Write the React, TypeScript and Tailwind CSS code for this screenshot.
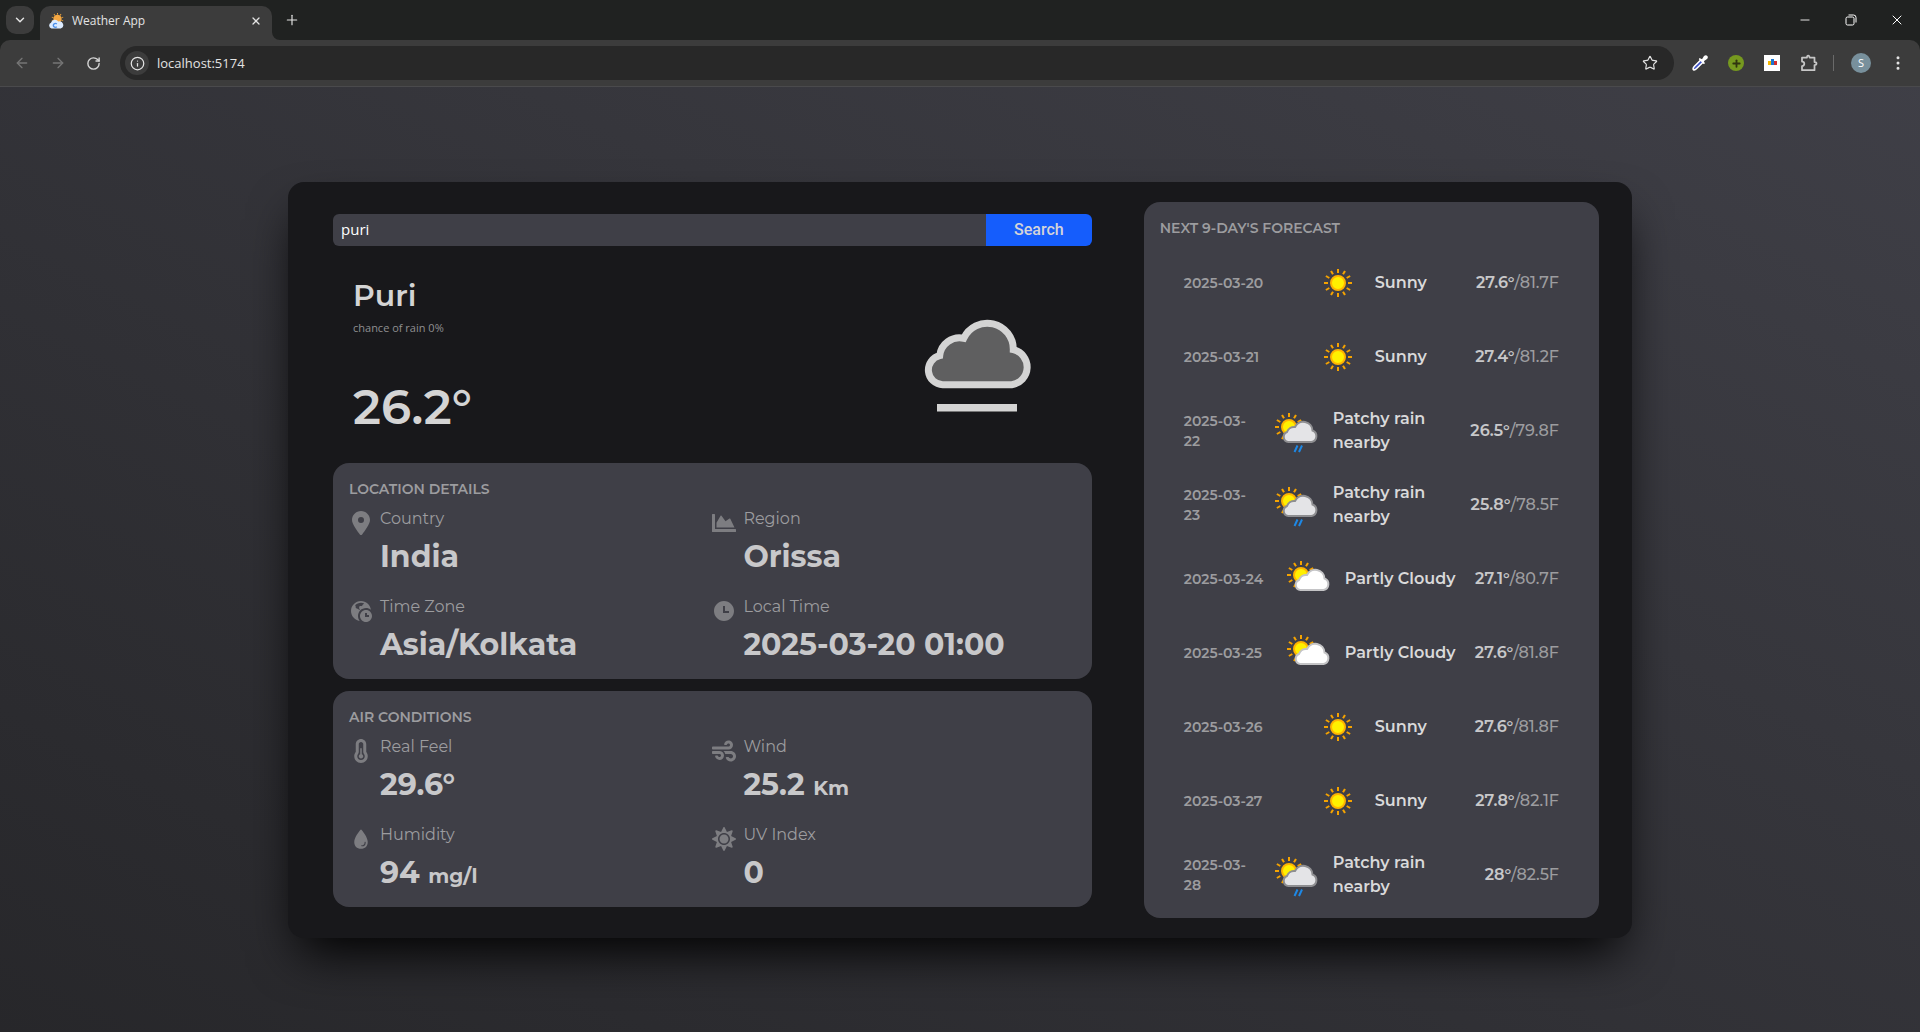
import { useState } from 'react'
import type { ReactNode } from 'react'
import {
  ArrowLeft,
  ArrowRight,
  ChevronDown,
  Info,
  Minus,
  MoreVertical,
  Plus,
  RotateCw,
  Star,
  X,
} from 'lucide-react'
import { FaChartArea, FaSun, FaWind } from 'react-icons/fa'
import { FaLocationDot, FaTemperatureHalf } from 'react-icons/fa6'
import { IoWater } from 'react-icons/io5'
import { RiTimeFill, RiTimeZoneFill } from 'react-icons/ri'

type Sky = 'sunny' | 'partly' | 'rain'

const days: { date: string; sky: Sky; text: string; c: string; f: string }[] = [
  { date: '2025-03-20', sky: 'sunny', text: 'Sunny', c: '27.6°', f: '81.7F' },
  { date: '2025-03-21', sky: 'sunny', text: 'Sunny', c: '27.4°', f: '81.2F' },
  { date: '2025-03-22', sky: 'rain', text: 'Patchy rain nearby', c: '26.5°', f: '79.8F' },
  { date: '2025-03-23', sky: 'rain', text: 'Patchy rain nearby', c: '25.8°', f: '78.5F' },
  { date: '2025-03-24', sky: 'partly', text: 'Partly Cloudy', c: '27.1°', f: '80.7F' },
  { date: '2025-03-25', sky: 'partly', text: 'Partly Cloudy', c: '27.6°', f: '81.8F' },
  { date: '2025-03-26', sky: 'sunny', text: 'Sunny', c: '27.6°', f: '81.8F' },
  { date: '2025-03-27', sky: 'sunny', text: 'Sunny', c: '27.8°', f: '82.1F' },
  { date: '2025-03-28', sky: 'rain', text: 'Patchy rain nearby', c: '28°', f: '82.5F' },
]

const rowColumns: Record<Sky, string> = {
  sunny: 'grid-cols-[122px_69px_1fr_auto]',
  partly: 'grid-cols-[92px_69px_1fr_auto]',
  rain: 'grid-cols-[80px_69px_1fr_auto]',
}

function SunShape({ x, y }: { x: number; y: number }) {
  return (
    <g transform={`translate(${x} ${y})`}>
      {Array.from({ length: 12 }, (_, i) => (
        <line key={i} x1="0" y1="-14" x2="0" y2="-10" stroke="#f5a300" strokeWidth="2" transform={`rotate(${i * 30})`} />
      ))}
      <circle r="7" fill="#fff000" stroke="#ffb400" strokeWidth="2" />
    </g>
  )
}

function SkyIcon({ sky }: { sky: Sky }) {
  const rain = sky === 'rain'
  return (
    <svg viewBox="0 0 64 64" className="size-16" aria-hidden="true">
      {sky === 'sunny' ? (
        <SunShape x={32} y={32} />
      ) : (
        <>
          <SunShape x={25} y={28} />
          <path
            d="M24.5 43A5.2 5.2 0 0 1 23 33A7.6 7.6 0 0 1 31 28A9.2 9.2 0 0 1 48.5 31.5A6 6 0 0 1 47.5 43Z"
            fill={rain ? '#e4e4e7' : '#ffffff'}
            stroke={rain ? '#8e8e91' : '#c4c4c6'}
            strokeWidth="2"
          />
          {rain && <path d="M33.5 46.5L30.5 53M38 46.5L35 53" stroke="#1e88e5" strokeWidth="2" />}
        </>
      )}
    </svg>
  )
}

function OvercastIcon() {
  return (
    <svg viewBox="0 0 128 128" className="size-32" aria-hidden="true">
      <path
        d="M29.7 85.7A14.7 14.7 0 0 1 26.7 56.7A20 20 0 0 1 50.7 39.3A26 26 0 0 1 100.3 50.7A17.8 17.8 0 0 1 98.7 85.7Z"
        fill="#5f5f60"
        stroke="#d4d4d4"
        strokeWidth="7"
      />
      <rect x="24" y="105" width="80" height="7.5" fill="#d4d4d4" />
    </svg>
  )
}

function Detail({ icon, label, value, unit }: { icon: ReactNode; label: string; value: string; unit?: string }) {
  return (
    <div className="flex gap-[7px]">
      <div className="mt-1 flex size-6 shrink-0 justify-center text-2xl text-[#7d7d81]">{icon}</div>
      <div>
        <p className="text-base text-[#9c9c9f]">{label}</p>
        <p className="mt-2 text-[30px] leading-9 font-bold text-[#c8c8ca]">
          {value} {unit && <span className="text-xl">{unit}</span>}
        </p>
      </div>
    </div>
  )
}

function Panel({ title, children }: { title: string; children: ReactNode }) {
  return (
    <section className="rounded-2xl bg-zinc-700 p-4">
      <h2 className="text-sm font-semibold text-[#9c9c9f]">{title}</h2>
      <div className="mt-2 grid grid-cols-2 gap-y-5">{children}</div>
    </section>
  )
}

function Favicon() {
  return (
    <svg viewBox="0 0 16 16" className="size-4" aria-hidden="true">
      <g transform="translate(9.5 6)">
        {Array.from({ length: 10 }, (_, i) => (
          <line key={i} y1="-6" y2="-4.4" stroke="#e9a23b" strokeWidth="1" transform={`rotate(${i * 36})`} />
        ))}
        <circle r="4.2" fill="#f5a742" />
      </g>
      <path d="M3.5 15.5A3 3 0 0 1 3 9.8A4 4 0 0 1 10.3 8.6A3.3 3.3 0 0 1 12.8 15.5Z" fill="#dcebff" />
      <path d="M8.8 11A2 2 0 1 0 8.8 13.8" fill="none" stroke="#4b8fea" strokeWidth="1.4" />
    </svg>
  )
}

function Browser() {
  return (
    <header className="bg-[#202221] font-['Open_Sans',sans-serif] text-[#e3e3e3]">
      <div className="flex h-10 items-end">
        <button aria-label="Search tabs" className="mb-[6px] ml-[6px] flex size-7 items-center justify-center rounded-[10px] bg-[#3c3c3c]">
          <ChevronDown size={14} strokeWidth={2.5} />
        </button>
        <div className="ml-[6px] flex h-[34px] w-[232px] items-center rounded-t-[10px] bg-[#3c3c3c] pr-2 pl-2 pb-1">
          <Favicon />
          <span className="ml-2 flex-1 text-[12px] leading-4">Weather App</span>
          <button aria-label="Close tab" className="flex size-4 items-center justify-center">
            <X size={12} strokeWidth={2.5} />
          </button>
        </div>
        <svg viewBox="0 0 8 8" className="size-2 text-[#3c3c3c]" aria-hidden="true">
          <path d="M0 0A8 8 0 0 0 8 8H0Z" fill="currentColor" />
        </svg>
        <button aria-label="New tab" className="mb-[12px] ml-1 flex size-4 items-center justify-center">
          <Plus size={16} strokeWidth={1.75} />
        </button>
        <div className="mb-[12px] ml-auto flex items-center gap-[30px] pr-[15px] text-white">
          <button aria-label="Minimize" className="flex size-4 items-center justify-center">
            <Minus size={14} strokeWidth={1.5} />
          </button>
          <button aria-label="Restore" className="flex size-4 items-center justify-center">
            <svg viewBox="0 0 12 12" className="size-3" fill="none" stroke="currentColor" aria-hidden="true">
              <rect x="1" y="3" width="8" height="8" rx="1.5" />
              <path d="M3.5 1H8.5A2.5 2.5 0 0 1 11 3.5V8.5" />
            </svg>
          </button>
          <button aria-label="Close" className="flex size-4 items-center justify-center">
            <X size={16} strokeWidth={1.5} />
          </button>
        </div>
      </div>
      <div className="flex h-[47px] items-center rounded-t-[10px] border-b border-[#4a4a4c] bg-[#3c3c3c] pl-[14px]">
        <button aria-label="Back" className="text-[#757575]">
          <ArrowLeft size={16} strokeWidth={2} />
        </button>
        <button aria-label="Forward" className="ml-5 text-[#757575]">
          <ArrowRight size={16} strokeWidth={2} />
        </button>
        <button aria-label="Reload" className="ml-5 text-[#d5d5d5]">
          <RotateCw size={15} strokeWidth={2.25} />
        </button>
        <div className="ml-[19px] flex h-[34px] flex-1 items-center rounded-full bg-[#282828] pr-4 pl-[5px]">
          <button aria-label="Site information" className="flex size-6 items-center justify-center rounded-full bg-[#3c3c3c]">
            <Info size={15} strokeWidth={2} />
          </button>
          <input
            aria-label="Address"
            defaultValue="localhost:5174"
            className="ml-2 flex-1 bg-transparent text-[13px] leading-5 outline-none"
          />
          <button aria-label="Bookmark this tab">
            <Star size={16} strokeWidth={1.75} />
          </button>
        </div>
        <div className="flex items-center pl-[18px]">
          <button aria-label="Colour picker" className="flex size-4 items-center">
            <svg viewBox="0 0 16 16" className="size-4" aria-hidden="true">
              <path d="M9.5 4.2L2.2 11.5C1.3 12.5 1 14 1.4 14.7C2.2 15 3.6 14.6 4.4 13.8L11.8 6.5" fill="#3c50c8" stroke="#fff" strokeWidth="1.6" />
              <path d="M7.5 3L10 4.2L12 1Q14-.4 15.3.9Q16.5 2.2 15 4L11.8 6.2L13 8.5L11.5 9L6.8 4.2Z" fill="#fff" />
            </svg>
          </button>
          <button aria-label="Add extension" className="ml-5 flex size-4 items-center justify-center rounded-full bg-[#76991f] text-[#30350f]">
            <Plus size={11} strokeWidth={4} />
          </button>
          <button aria-label="Analytics extension" className="ml-5 flex size-4 items-center justify-center bg-white">
            <span className="h-1 w-[3px] bg-[#f5b800]" />
            <span className="mb-[2px] h-[6px] w-[3px] bg-[#1976d2]" />
            <span className="h-1 w-[3px] bg-[#d32f2f]" />
          </button>
          <button aria-label="Extensions" className="ml-5 text-[#c7c7c7]">
            <svg viewBox="0 0 18 18" className="size-[18px]" fill="none" stroke="currentColor" strokeWidth="1.75" aria-hidden="true">
              <path d="M2 3.5H7Q7 1.5 8.2 1.5T9.5 3.5H14.5V8Q16.5 8 16.5 9.5T14.5 11V16.2H2V12Q4.3 12 4.3 9.8T2 7.6Z" strokeLinejoin="round" />
            </svg>
          </button>
          <span className="ml-[15px] h-4 w-px bg-[#6a6a6a]" />
          <button className="ml-[17px] flex size-5 items-center justify-center rounded-full bg-[#78909c] text-[11px] text-white">S</button>
          <button aria-label="Menu" className="mr-3 ml-[17px] flex w-5 justify-center">
            <MoreVertical size={18} strokeWidth={2} />
          </button>
        </div>
      </div>
    </header>
  )
}

export default function App() {
  const [city, setCity] = useState('puri')
  return (
    <div className="flex min-h-screen flex-col bg-zinc-800">
      <Browser />
      <main className="flex flex-1 items-center justify-center bg-linear-to-tr from-zinc-800 to-zinc-700 font-['Montserrat','Inter',sans-serif]">
        <div className="grid w-[70%] grid-cols-[5fr_3fr] gap-[52px] rounded-2xl bg-[#18181b] py-5 pr-[33px] pl-[45px] shadow-[0_25px_50px_-12px_rgba(0,0,0,1)]">
          <div className="flex min-w-0 flex-col pt-3">
            <form className="flex h-8" onSubmit={(e) => e.preventDefault()}>
              <input
                aria-label="City"
                value={city}
                onChange={(e) => setCity(e.target.value)}
                className="min-w-0 flex-1 rounded-l-md bg-zinc-700 px-2 font-['Open_Sans',sans-serif] text-[15px] text-white outline-none"
              />
              <button className="rounded-r-md bg-[#155dfc] px-7 font-['Roboto',sans-serif] text-base font-medium text-[#d4d4d8]">
                Search
              </button>
            </form>
            <div className="flex flex-1 items-center justify-between px-5 pt-[30px]">
              <div className="self-start">
                <h1 className="text-[30px] leading-10 font-semibold text-[#d4d4d4]">Puri</h1>
                <p className="mt-1 font-['Open_Sans',sans-serif] text-[11px] leading-4 text-[#8f8f91]">chance of rain 0%</p>
                <p className="mt-[47px] text-[48px] leading-[48px] font-semibold text-[#d4d4d4]">26.2°</p>
              </div>
              <div className="mr-[31px] -mt-3">
                <OvercastIcon />
              </div>
            </div>
            <div className="flex flex-col gap-3 pb-[11px]">
              <Panel title="LOCATION DETAILS">
                <Detail icon={<FaLocationDot />} label="Country" value="India" />
                <Detail icon={<FaChartArea />} label="Region" value="Orissa" />
                <Detail icon={<RiTimeZoneFill />} label="Time Zone" value="Asia/Kolkata" />
                <Detail icon={<RiTimeFill />} label="Local Time" value="2025-03-20 01:00" />
              </Panel>
              <Panel title="AIR CONDITIONS">
                <Detail icon={<FaTemperatureHalf />} label="Real Feel" value="29.6°" />
                <Detail icon={<FaWind />} label="Wind" value="25.2" unit="Km" />
                <Detail icon={<IoWater />} label="Humidity" value="94" unit="mg/l" />
                <Detail icon={<FaSun />} label="UV Index" value="0" />
              </Panel>
            </div>
          </div>
          <section className="min-w-0 rounded-2xl bg-zinc-700 px-4 pt-4 pb-1.5">
            <h2 className="text-sm font-semibold text-[#9c9c9f]">NEXT 9-DAY'S FORECAST</h2>
            <ul className="mt-2 px-6">
              {days.map((d) => (
                <li key={d.date} className={`grid h-[74px] items-center ${rowColumns[d.sky]}`}>
                  <span className={`text-sm font-semibold text-[#9c9c9f] ${d.sky === 'rain' ? 'w-16' : 'whitespace-nowrap'}`}>
                    {d.date}
                  </span>
                  <SkyIcon sky={d.sky} />
                  <span className={`font-semibold text-[#d9d9da] ${d.sky === 'rain' ? 'w-24' : 'whitespace-nowrap'}`}>{d.text}</span>
                  <span className="font-medium text-[#9c9c9f]">
                    <span className="font-semibold text-[#c8c8ca]">{d.c}</span>/{d.f}
                  </span>
                </li>
              ))}
            </ul>
          </section>
        </div>
      </main>
    </div>
  )
}
